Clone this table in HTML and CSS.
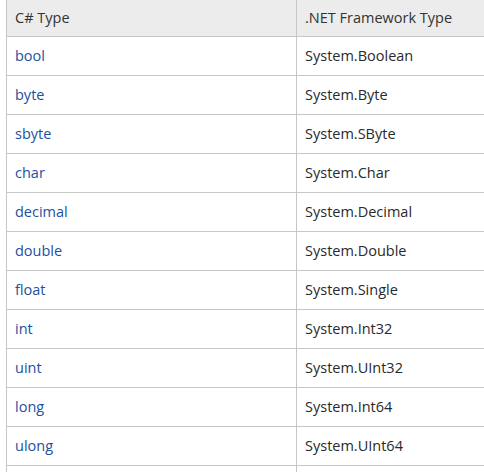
FILE: index.html
```html
<!DOCTYPE html>
<html>
<head>
<meta charset="utf-8">
<link rel="stylesheet" href="styles.css">
</head>
<body>
<table class="types">
  <thead>
    <tr><th class="c1">C# Type</th><th class="c2">.NET Framework Type</th></tr>
  </thead>
  <tbody>
    <tr><td><a href="#">bool</a></td><td>System.Boolean</td></tr>
    <tr><td><a href="#">byte</a></td><td>System.Byte</td></tr>
    <tr><td><a href="#">sbyte</a></td><td>System.SByte</td></tr>
    <tr><td><a href="#">char</a></td><td>System.Char</td></tr>
    <tr><td><a href="#">decimal</a></td><td>System.Decimal</td></tr>
    <tr><td><a href="#">double</a></td><td>System.Double</td></tr>
    <tr><td><a href="#">float</a></td><td>System.Single</td></tr>
    <tr><td><a href="#">int</a></td><td>System.Int32</td></tr>
    <tr><td><a href="#">uint</a></td><td>System.UInt32</td></tr>
    <tr><td><a href="#">long</a></td><td>System.Int64</td></tr>
    <tr><td><a href="#">ulong</a></td><td>System.UInt64</td></tr>
    <tr class="tail"><td></td><td></td></tr>
  </tbody>
</table>
</body>
</html>
```
FILE: styles.css
```css
html, body {
  margin: 0;
  padding: 0;
  background: #fff;
  overflow: hidden;
}
.types {
  margin-left: 6px;
  margin-top: 0;
  border-collapse: collapse;
  font-family: "Open Sans", "Noto Sans", sans-serif;
  font-size: 14.5px;
  color: #2a2a2a;
  width: 560px;
  table-layout: fixed;
}
.types th, .types td {
  border: 1px solid #c6c6c6;
  border-top: none;
  text-align: left;
  padding: 0 8px 2px 8px;
  font-weight: normal;
}
.types th {
  background: #ececec;
  height: 34px;
  color: #333;
}
.types td {
  height: 36px;
}
.c1 { width: 273px; }
.types a {
  color: #1e4fa0;
  text-decoration: none;
}
```
